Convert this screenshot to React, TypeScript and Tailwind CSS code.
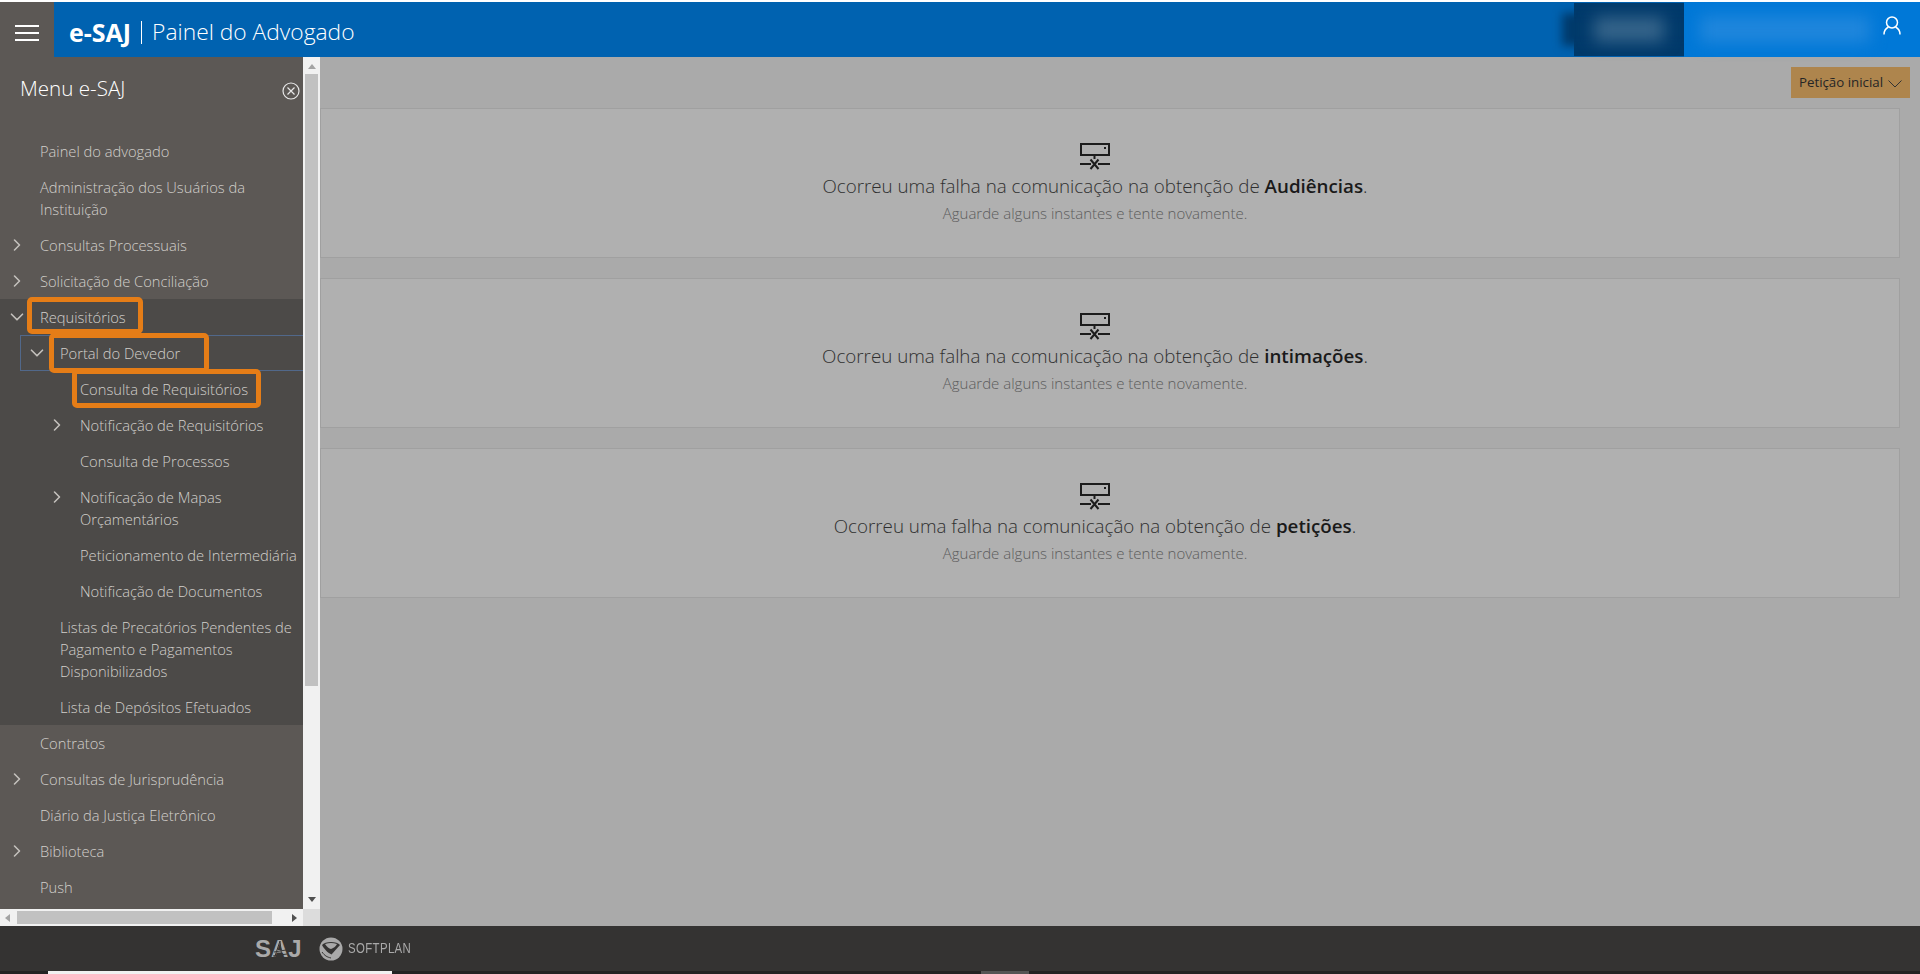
import { ChevronDown, ChevronRight } from 'lucide-react'

const font = "font-['Open_Sans','Noto_Sans',sans-serif]"

interface ItemProps {
  label: string
  lines?: string[]
  level?: 0 | 1 | 2
  arrow?: 'right' | 'down'
  mark?: string
  boxed?: boolean
}

function MenuItem({ label, lines, level = 0, arrow, mark, boxed }: ItemProps) {
  const pad = level === 0 ? 'pl-10' : level === 1 ? 'pl-[60px]' : 'pl-20'
  const iconLeft = level === 0 ? 'left-[7px]' : level === 1 ? 'left-[27px]' : 'left-[47px]'
  return (
    <li className={`relative ${pad} pr-1 py-[7px] text-[14.7px] leading-[22px] font-light text-[#d2cfcb] whitespace-nowrap`}>
      {boxed && <span className="absolute left-5 right-0 inset-y-0 border border-r-0 border-[#51688a]" />}
      {arrow === 'right' && <ChevronRight size={20} strokeWidth={1.9} className={`absolute ${iconLeft} top-[8px] text-[#c4c1bd]`} />}
      {arrow === 'down' && <ChevronDown size={22} strokeWidth={1.8} className={`absolute ${iconLeft} -ml-[1px] top-[7px] text-[#c4c1bd]`} />}
      {lines ? lines.map((l) => <div key={l}>{l}</div>) : label}
      {mark && <span className={`absolute ${mark} border-[5px] border-[#e57d17] rounded-[5px]`} />}
    </li>
  )
}

function ServerIcon() {
  return (
    <svg width="30" height="27" viewBox="0 0 30 27" fill="none" stroke="#1c1c1c" strokeWidth="2" className="mb-[3px]">
      <rect x="1" y="1" width="28" height="11" />
      <rect x="24" y="4" width="2" height="2" fill="#1c1c1c" stroke="none" />
      <path d="M14.5 12v4M0 21h11M18 21h12M10.5 16.5l8 9.5M18.5 16.5l-8 9.5" />
    </svg>
  )
}

function ErrorCard({ what }: { what: string }) {
  return (
    <div className="h-[150px] border border-[#a0a0a0] bg-[#b0b0b0] flex flex-col items-center pt-[34px] pr-[30px]">
      <ServerIcon />
      <p className="text-[18.75px] leading-[26px] font-light text-[#2f2f2f]">
        Ocorreu uma falha na comunicação na obtenção de <b className="font-semibold text-[#1a1a1a]">{what}</b>.
      </p>
      <p className="text-[15px] leading-5 font-light text-[#5c5c5c] mt-[4px]">Aguarde alguns instantes e tente novamente.</p>
    </div>
  )
}

function Logos() {
  return (
    <div className="flex items-center pl-[255px] text-[#a9a9a9]">
      <span className="relative w-[65px] font-['Liberation_Sans',sans-serif] font-bold text-[24px] leading-none">
        SAJ
        {/* teia sobre o A */}
        <svg width="18" height="20" viewBox="0 0 18 20" stroke="#343332" strokeWidth="1" className="absolute left-[16px] top-[2px]">
          <path d="M9 2l-6 18M9 2l2 18M3 13l12-2M2 17l14-2" />
        </svg>
      </span>
      <svg width="24" height="24" viewBox="0 0 24 24" className="-ml-[1px]">
        <circle cx="12" cy="12" r="11.5" fill="#a9a9a9" />
        <path d="M3 8c3-4 15-4 18 0l-8.5 9.5C9 16 5 12 3 8z" fill="#343332" />
        <path d="M6 7c2 3 4 4.500 6 5 3-1 5-3 6-5-4-1.500-8-1.500-12 0z" fill="#a9a9a9" />
        <path d="M3 15c3 4 5 5 9 6" fill="none" stroke="#343332" strokeWidth="1" />
      </svg>
      <span className="ml-[5px] font-['Liberation_Sans',sans-serif] text-[15px] tracking-[0.5px] scale-x-[0.76] origin-left">SOFTPLAN</span>
    </div>
  )
}

export default function App() {
  return (
    <div className={`${font} h-[974px] w-[1920px] overflow-hidden flex flex-col bg-[#aaaaaa]`}>
      <div className="h-[2px] bg-white shrink-0" />

      {/* Header */}
      <header className="h-[55px] shrink-0 flex text-white bg-[#0062b0]">
        <div className="w-[54px] bg-[#5c5855] flex flex-col items-center justify-center gap-[5px] pt-[6px]">
          <span className="w-6 h-[2px] bg-white" />
          <span className="w-6 h-[2px] bg-white" />
          <span className="w-6 h-[2px] bg-white" />
        </div>
        <div className="pl-[15px] flex items-center pt-[6px]">
          <b className="font-bold text-[25px]">e-SAJ</b>
          <span className="mx-[10px] w-px h-[23px] bg-white" />
          <span className="font-light text-[22.8px]">Painel do Advogado</span>
        </div>
        <div className="ml-auto flex items-stretch">
          <div className="relative w-[110px] my-[1px] bg-[#003a6b]">
            <span className="absolute -inset-x-[12px] inset-y-[10px] bg-[#003a6b] blur-[5px]" />
            <span className="absolute left-[20px] right-[20px] inset-y-[14px] bg-[#35648a] blur-[8px]" />
          </div>
          <div className="w-[236px] bg-[#0078d7] relative flex justify-end">
            <span className="absolute left-[16px] w-[170px] inset-y-[14px] bg-[#1f86dc] blur-[8px]" />
            <svg width="18" height="19" viewBox="0 0 18 19" fill="none" stroke="white" strokeWidth="1.5" className="relative mt-[14px] mr-[19px]">
              <circle cx="9" cy="6.500" r="5.500" />
              <path d="M1 18.500c0-4.500 2.500-6.500 4.500-7.500M17 18.500c0-4.500-2.500-6.500-4.500-7.500" />
            </svg>
          </div>
        </div>
      </header>

      <div className="flex-1 flex min-h-0">
        {/* Sidebar */}
        <aside className="w-[320px] shrink-0 flex bg-[#f1f1f1]">
          <div className="w-[303px] flex flex-col">
            <div className="flex-1 bg-[#5c5855] overflow-hidden">
              <div className="flex items-start justify-between pl-5 pr-[3px] h-[76px]">
                <span className="text-[20.6px] font-light text-white leading-7 mt-[17px]">Menu e-SAJ</span>
                <svg width="18" height="18" viewBox="0 0 18 18" fill="none" stroke="#e8e8e8" strokeWidth="1.2" className="mt-[25px]">
                  <circle cx="9" cy="9" r="8" />
                  <path d="M5.500 5.500l7 7M12.500 5.500l-7 7" />
                </svg>
              </div>
              <ul>
                <MenuItem label="Painel do advogado" />
                <MenuItem label="Administração dos Usuários da Instituição" lines={['Administração dos Usuários da', 'Instituição']} />
                <MenuItem label="Consultas Processuais" arrow="right" />
                <MenuItem label="Solicitação de Conciliação" arrow="right" />
              </ul>
              <ul className="bg-[#4c4a48]">
                <MenuItem label="Requisitórios" arrow="down" mark="left-[27px] w-[116px] -top-[2px] h-[37px]" />
                <MenuItem label="Portal do Devedor" level={1} arrow="down" boxed mark="left-[49px] w-[160px] -top-[2px] h-[40px]" />
                <MenuItem label="Consulta de Requisitórios" level={2} mark="left-[72px] w-[189px] -top-[2px] h-[39px]" />
                <MenuItem label="Notificação de Requisitórios" level={2} arrow="right" />
                <MenuItem label="Consulta de Processos" level={2} />
                <MenuItem label="Notificação de Mapas Orçamentários" level={2} arrow="right" lines={['Notificação de Mapas', 'Orçamentários']} />
                <MenuItem label="Peticionamento de Intermediária" level={2} />
                <MenuItem label="Notificação de Documentos" level={2} />
                <MenuItem label="Listas de Precatórios" level={1} lines={['Listas de Precatórios Pendentes de', 'Pagamento e Pagamentos', 'Disponibilizados']} />
                <MenuItem label="Lista de Depósitos Efetuados" level={1} />
              </ul>
              <ul>
                <MenuItem label="Contratos" />
                <MenuItem label="Consultas de Jurisprudência" arrow="right" />
                <MenuItem label="Diário da Justiça Eletrônico" />
                <MenuItem label="Biblioteca" arrow="right" />
                <MenuItem label="Push" />
              </ul>
            </div>
            {/* horizontal scrollbar */}
            <div className="h-[17px] shrink-0 flex items-center bg-[#f1f1f1] px-[5px]">
              <span className="w-0 h-0 border-y-[4px] border-y-transparent border-r-[5px] border-r-[#a3a3a3]" />
              <div className="ml-[7px] w-[255px] h-[13px] bg-[#c1c1c1]" />
              <span className="ml-auto mr-[1px] w-0 h-0 border-y-[4px] border-y-transparent border-l-[5px] border-l-[#505050]" />
            </div>
          </div>
          {/* vertical scrollbar */}
          <div className="w-[17px] flex flex-col items-center bg-[#f1f1f1]">
            <span className="mt-[7px] w-0 h-0 border-x-[4px] border-x-transparent border-b-[5px] border-b-[#a3a3a3]" />
            <div className="mt-[5px] w-[13px] h-[612px] bg-[#c1c1c1]" />
            <span className="mt-auto mb-[7px] w-0 h-0 border-x-[4px] border-x-transparent border-t-[5px] border-t-[#505050]" />
            <div className="w-[17px] h-[17px] bg-[#dcdcdc] shrink-0" />
          </div>
        </aside>

        {/* Content */}
        <main className="flex-1 pr-[20px]">
          <div className="flex justify-end h-[51px] pt-[10px] -mr-[10px]">
            <button className="w-[119px] h-[31px] bg-[#ae854d] text-[13.3px] text-[#262626] flex items-center justify-center gap-[5px]">
              Petição inicial
              <svg width="14" height="8" viewBox="0 0 14 8" fill="none" stroke="#333" strokeWidth="1" className="mt-[3px]">
                <path d="M0.500 0.500L7 7l6.500-6.500" />
              </svg>
            </button>
          </div>
          <div className="flex flex-col gap-[20px]">
            <ErrorCard what="Audiências" />
            <ErrorCard what="intimações" />
            <ErrorCard what="petições" />
          </div>
        </main>
      </div>

      {/* Footer */}
      <footer className="h-[45px] shrink-0 bg-[#343332] flex items-center">
        <Logos />
      </footer>
      <div className="h-[3px] shrink-0 bg-[#232323] flex">
        <div className="ml-[48px] w-[344px] bg-[#f1f1f1]" />
        <div className="ml-[589px] w-[48px] bg-[#555555]" />
      </div>
    </div>
  )
}
